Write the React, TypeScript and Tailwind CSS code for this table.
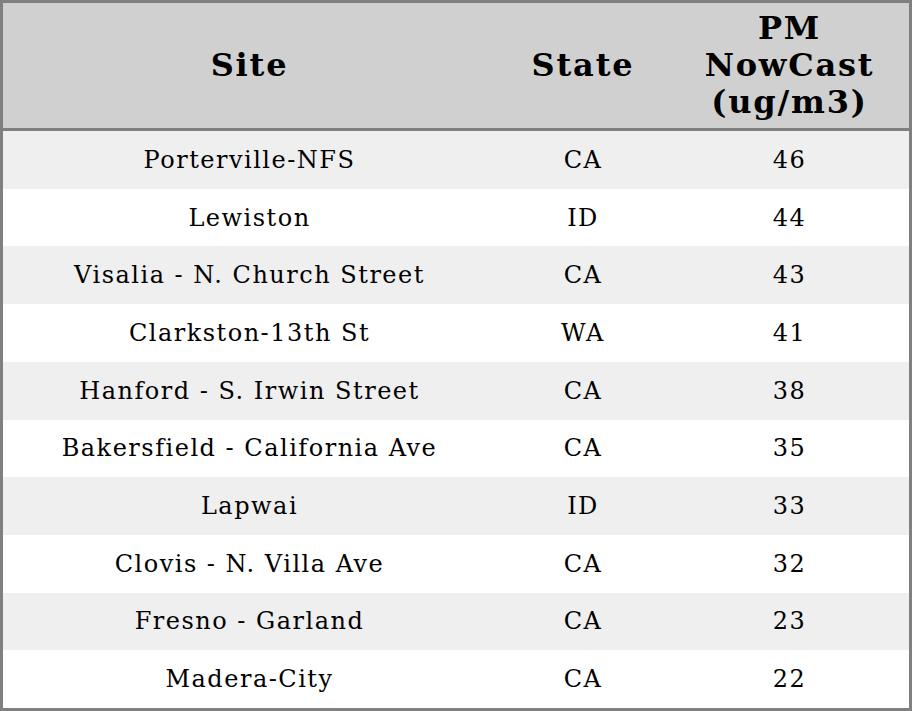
import React from 'react'

const rows = [
    { site: 'Porterville-NFS', state: 'CA', pm: 46 },
    { site: 'Lewiston', state: 'ID', pm: 44 },
    { site: 'Visalia - N. Church Street', state: 'CA', pm: 43 },
    { site: 'Clarkston-13th St', state: 'WA', pm: 41 },
    { site: 'Hanford - S. Irwin Street', state: 'CA', pm: 38 },
    { site: 'Bakersfield - California Ave', state: 'CA', pm: 35 },
    { site: 'Lapwai', state: 'ID', pm: 33 },
    { site: 'Clovis - N. Villa Ave', state: 'CA', pm: 32 },
    { site: 'Fresno - Garland', state: 'CA', pm: 23 },
    { site: 'Madera-City', state: 'CA', pm: 22 },
]

const App = () => {
    return (
        <div className="w-[912px] h-[711px] bg-white font-['DejaVu_Serif',serif] text-black">
            <div className="w-[912px] h-[711px] border-[3px] border-[#808080] flex flex-col">
                {/* header */}
                <div className="h-[125px] bg-[#d0d0d0] flex items-center text-[32px] leading-[37px] font-bold tracking-[1.8px] text-center">
                    <div className="w-[493px]">Site</div>
                    <div className="w-[174px]">State</div>
                    <div className="flex-1">
                        PM
                        <br />
                        NowCast
                        <br />
                        (ug/m3)
                    </div>
                </div>
                <div className="h-[3px] bg-[#808080]" />
                {/* rows */}
                <div className="flex-1 flex flex-col">
                    {rows.map((r, i) => (
                        <div
                            key={i}
                            className={
                                'flex-1 flex items-center text-[24px] leading-[28px] tracking-[1.5px] text-center ' +
                                (i % 2 === 0 ? 'bg-[#efefef]' : 'bg-white')
                            }
                        >
                            <div className="w-[493px]">{r.site}</div>
                            <div className="w-[174px]">{r.state}</div>
                            <div className="flex-1">{r.pm}</div>
                        </div>
                    ))}
                </div>
            </div>
        </div>
    )
}

export default App
